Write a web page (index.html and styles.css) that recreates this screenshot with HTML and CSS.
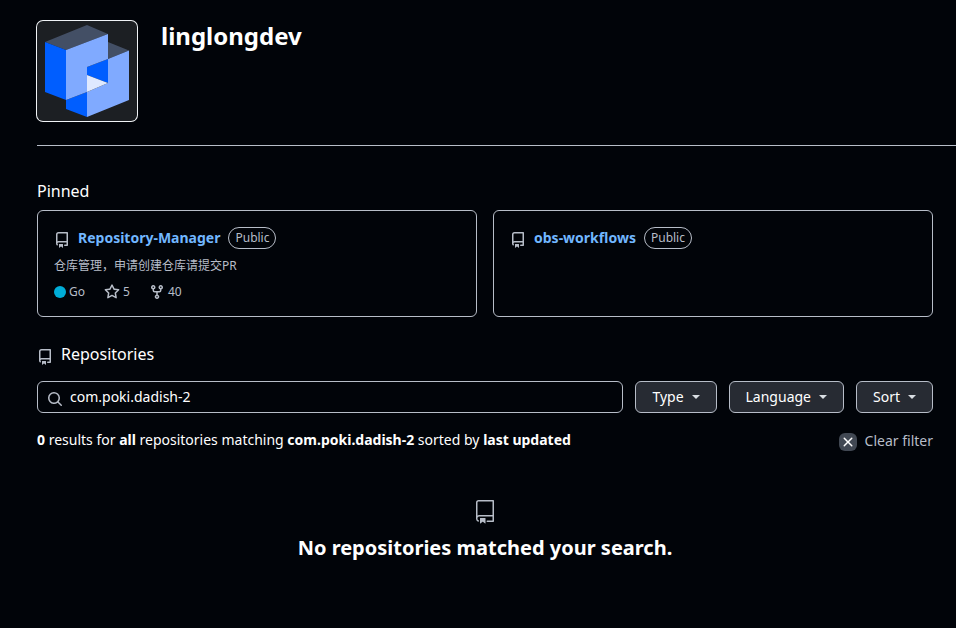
FILE: index.html
```html
<!DOCTYPE html>
<html lang="en">
<head>
<meta charset="utf-8">
<meta name="viewport" content="width=device-width, initial-scale=1">
<title>linglongdev</title>
<link rel="stylesheet" href="styles.css">
</head>
<body>
<svg class="sprite" aria-hidden="true">
  <symbol id="repo" viewBox="0 0 16 16"><path d="M2 2.5A2.5 2.5 0 0 1 4.5 0h8.75a.75.75 0 0 1 .75.75v12.5a.75.75 0 0 1-.75.75h-2.5a.75.75 0 0 1 0-1.5h1.75v-2h-8a1 1 0 0 0-.714 1.7.75.75 0 1 1-1.072 1.05A2.495 2.495 0 0 1 2 11.5Zm10.5-1h-8a1 1 0 0 0-1 1v6.708A2.486 2.486 0 0 1 4.5 9h8ZM5 12.25a.25.25 0 0 1 .25-.25h3.5a.25.25 0 0 1 .25.25v3.25a.25.25 0 0 1-.4.2l-1.45-1.087a.249.249 0 0 0-.3 0L5.4 15.7a.25.25 0 0 1-.4-.2Z"/></symbol>
</svg>
<header class="profile">
  <svg class="avatar" viewBox="0 0 100 100" role="img" aria-label="linglongdev logo">
    <path fill="#434f65" d="M8 21 50 4l21 9-42 16zM71 21l21 8.500-21 8.500z"/>
    <path fill="#005eff" d="M8 21l21 8v50L8 71zM50 46l21-8v24l-21-8zM29 79l21-8v25l-21-8z"/>
    <path fill="#80aaff" d="M29 29l42-16v25l-21 8v25l-21 8zM92 29.500V79L50 96V71l21-9V38z"/>
    <path fill="#dfe9ff" d="M50 54l21 8-21 9z"/>
  </svg>
  <h1 class="profile-name">linglongdev</h1>
</header>
<main class="content">
  <section>
    <h2 class="section-title">Pinned</h2>
    <div class="pins">
      <article class="pin">
        <div class="pin-head">
          <svg class="icon"><use href="#repo"/></svg>
          <a class="pin-link" href="#">Repository-Manager</a>
          <span class="label">Public</span>
        </div>
        <p class="pin-text" lang="zh">仓库管理，申请创建仓库请提交PR</p>
        <div class="pin-meta">
          <span class="meta"><span class="dot"></span>Go</span>
          <a class="meta" href="#" aria-label="stars"><svg class="icon" viewBox="0 0 16 16"><path d="M8 .25a.75.75 0 0 1 .673.418l1.882 3.815 4.210.612a.75.75 0 0 1 .416 1.279l-3.046 2.970.719 4.192a.751.751 0 0 1-1.088.791L8 12.347l-3.766 1.980a.75.75 0 0 1-1.088-.790l.720-4.194L.818 6.374a.75.75 0 0 1 .416-1.280l4.210-.611L7.327.668A.75.75 0 0 1 8 .250Zm0 2.445L6.615 5.500a.75.75 0 0 1-.564.410l-3.097.450 2.240 2.184a.75.75 0 0 1 .216.664l-.528 3.084 2.769-1.456a.75.75 0 0 1 .698 0l2.770 1.456-.530-3.084a.75.75 0 0 1 .216-.664l2.240-2.183-3.096-.450a.75.75 0 0 1-.564-.410L8 2.694Z"/></svg>5</a>
          <a class="meta" href="#" aria-label="forks"><svg class="icon" viewBox="0 0 16 16"><path d="M5 5.372v.878c0 .414.336.750.750.750h4.500a.750.750 0 0 0 .750-.750v-.878a2.250 2.250 0 1 1 1.500 0v.878a2.250 2.250 0 0 1-2.250 2.250h-1.500v2.128a2.251 2.251 0 1 1-1.500 0V8.500h-1.500A2.250 2.250 0 0 1 3.500 6.250v-.878a2.250 2.250 0 1 1 1.500 0ZM5 3.250a.750.750 0 1 0-1.500 0 .750.750 0 0 0 1.500 0Zm6.750.750a.750.750 0 1 0 0-1.500.750.750 0 0 0 0 1.500Zm-3 8.750a.750.750 0 1 0-1.500 0 .750.750 0 0 0 1.500 0Z"/></svg>40</a>
        </div>
      </article>
      <article class="pin">
        <div class="pin-head">
          <svg class="icon"><use href="#repo"/></svg>
          <a class="pin-link" href="#">obs-workflows</a>
          <span class="label">Public</span>
        </div>
      </article>
    </div>
  </section>
  <section class="repos">
    <h2 class="section-title with-icon"><svg class="icon"><use href="#repo"/></svg>Repositories</h2>
    <form class="filters">
      <div class="search">
        <svg class="icon" viewBox="0 0 16 16"><path d="M10.680 11.740a6 6 0 0 1-7.922-8.982 6 6 0 0 1 8.982 7.922l3.040 3.040a.749.749 0 0 1-.326 1.275.749.749 0 0 1-.734-.215ZM11.500 7a4.499 4.499 0 1 0-8.997 0A4.499 4.499 0 0 0 11.500 7Z"/></svg>
        <input class="search-input" type="text" value="com.poki.dadish-2" aria-label="Find a repository" spellcheck="false">
      </div>
      <button class="button" type="button">Type<span class="caret"></span></button>
      <button class="button" type="button">Language<span class="caret"></span></button>
      <button class="button" type="button">Sort<span class="caret"></span></button>
    </form>
    <div class="results">
      <p class="summary"><strong>0</strong> results for <strong>all</strong> repositories matching <strong>com.poki.dadish-2</strong> sorted by <strong>last updated</strong></p>
      <a class="clear" href="#"><span class="clear-box"><svg class="icon" viewBox="0 0 16 16"><path d="M3.720 3.720a.750.750 0 0 1 1.060 0L8 6.940l3.220-3.220a.750.750 0 1 1 1.060 1.060L9.060 8l3.220 3.220a.750.750 0 1 1-1.060 1.060L8 9.060l-3.220 3.220a.750.750 0 0 1-1.060-1.060L6.940 8 3.720 4.780a.750.750 0 0 1 0-1.060Z"/></svg></span>Clear filter</a>
    </div>
    <div class="blank">
      <svg class="blank-icon" viewBox="0 0 24 24"><path d="M3 2.750A2.750 2.750 0 0 1 5.750 0h14.500a.750.750 0 0 1 .750.750v20.500a.750.750 0 0 1-.750.750h-6a.750.750 0 0 1 0-1.500h5.250v-4H6A1.500 1.500 0 0 0 4.500 18v.750c0 .716.430 1.334 1.050 1.605a.750.750 0 0 1-.600 1.374A3.250 3.250 0 0 1 3 18.750ZM19.500 1.500H5.750c-.690 0-1.250.560-1.250 1.250v12.651A2.989 2.989 0 0 1 6 15h13.500Z"/><path d="M7 18.250a.250.250 0 0 1 .250-.250h5a.250.250 0 0 1 .250.250v5.010a.250.250 0 0 1-.397.201l-2.206-1.604a.250.250 0 0 0-.294 0L7.397 23.460a.250.250 0 0 1-.397-.200v-5.010Z"/></svg>
      <h3 class="blank-title">No repositories matched your search.</h3>
    </div>
  </section>
</main>
</body>
</html>
```
FILE: styles.css
```css
* { box-sizing: border-box; }

body {
  margin: 0;
  background: #010409;
  color: #fff;
  font: 14px/20px "Noto Sans", "Noto Sans CJK SC", sans-serif;
}

h1, h2, h3, p { margin: 0; }
a { color: inherit; text-decoration: none; }
.sprite { display: none; }
.icon { flex: none; width: 16px; height: 16px; fill: #b7bdc8; }

.profile {
  display: flex;
  gap: 24px;
  margin-left: 37px;
  padding: 21px 0 24px;
  border-bottom: 1px solid #b7bdc8;
}
.avatar {
  width: 100px;
  height: 100px;
  border-radius: 6px;
  background: #1c1f23;
  box-shadow: 0 0 0 1px #f0f3f6;
}
.profile-name { font-size: 24px; line-height: 30px; font-weight: 700; }

.content { padding: 33px 23px 32px 37px; }
.section-title { font-size: 16px; line-height: 24px; font-weight: 400; }
.with-icon { display: flex; align-items: center; gap: 8px; }
.with-icon .icon { margin-top: 6px; }

.pins {
  display: grid;
  grid-template-columns: 1fr 1fr;
  gap: 16px;
  margin-top: 7px;
}
.pin {
  padding: 16px 16px 14px;
  border: 1px solid #b7bdc8;
  border-radius: 6px;
  color: #b7bdc8;
  font-size: 12px;
}
.pin-head { display: flex; align-items: center; gap: 8px; }
.pin-head .icon { margin-top: 4px; }
.pin-link { color: #71b7ff; font-size: 14px; font-weight: 700; }
.label {
  padding: 1px 6px;
  border: 1px solid #b7bdc8;
  border-radius: 16px;
  line-height: 18px;
}
.pin-text { margin-top: 7px; }
.pin-meta { display: flex; gap: 19px; margin-top: 6px; }
.meta { display: flex; align-items: center; gap: 3px; }
.dot { width: 12px; height: 12px; border-radius: 50%; background: #00add8; }

.repos { margin-top: 25px; }
.filters { display: flex; gap: 12px; margin-top: 15px; }
.search {
  display: flex;
  flex: 1;
  align-items: center;
  gap: 7px;
  padding: 0 9px;
  border: 1px solid #b7bdc8;
  border-radius: 6px;
}
.search .icon { margin-top: 4px; }
.search-input {
  flex: 1;
  min-width: 0;
  padding: 0;
  border: 0;
  outline: 0;
  background: transparent;
  color: inherit;
  font: inherit;
}
.button {
  display: flex;
  align-items: center;
  gap: 8px;
  padding: 5px 16px;
  border: 1px solid #b7bdc8;
  border-radius: 6px;
  background: #272b33;
  color: inherit;
  font: inherit;
}
.caret {
  border: 4px solid transparent;
  border-top-color: #d9dee3;
  border-bottom: 0;
}

.results { display: flex; justify-content: space-between; margin-top: 17px; }
.clear {
  display: flex;
  align-items: center;
  gap: 8px;
  margin-top: 1px;
  color: #b7bdc8;
}
.clear-box {
  display: flex;
  margin-top: 2px;
  padding: 1px;
  border-radius: 6px;
  background: #414853;
}
.clear-box .icon { fill: #fff; }

.blank { margin-top: 49px; text-align: center; }
.blank-icon { display: block; width: 24px; height: 24px; margin: 0 auto 8px; fill: #b7bdc8; }
.blank-title { font-size: 20px; line-height: 32px; font-weight: 700; }
```
